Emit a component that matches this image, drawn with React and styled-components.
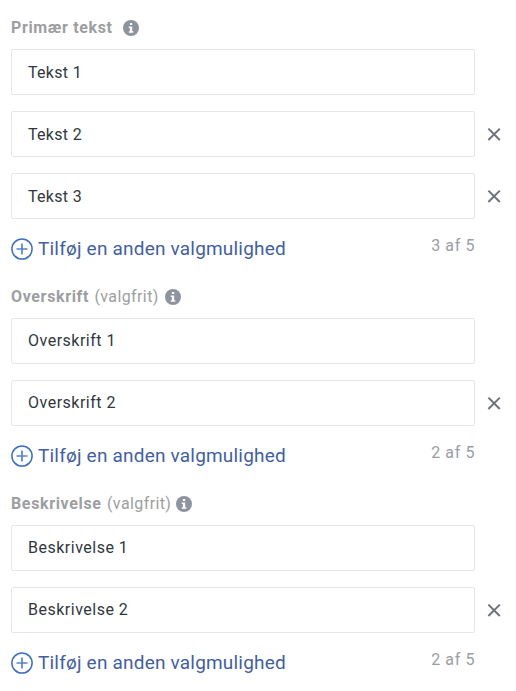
import React, { useState } from "react";
import styled, { createGlobalStyle } from "styled-components";

const GlobalStyle = createGlobalStyle`
  * {
    box-sizing: border-box;
  }

  body {
    margin: 0;
    background-color: #ffffff;
    font-family: Roboto, "Liberation Sans", sans-serif;
  }
`

const Form = styled.div`
  width: 516px;
  height: 691px;
  padding: 17px 14px 0 11px;
  overflow: hidden;
`

const Header = styled.div`
  display: flex;
  align-items: center;
  height: 21px;
  margin-bottom: 11px;
  font-size: 16px;
  line-height: 21px;
  color: #9c9ea1;
  white-space: pre;

  .title {
    font-weight: 700;
    letter-spacing: 0.65px;
  }

  .optional {
    margin-left: 1px;
    letter-spacing: 0.4px;
  }

  svg {
    margin-left: ${props => props.$iconGap};
  }
`

const Fields = styled.div`
  display: flex;
  flex-direction: column;
  gap: 16px;
`

const FieldRow = styled.div`
  display: flex;
  align-items: center;
`

const Input = styled.input`
  width: 464px;
  height: 46px;
  padding: ${props => (props.$raised ? "0 16px 2px" : "0 16px")};
  border: 1px solid #e5e6e7;
  border-radius: 2px;
  outline: none;
  background-color: #ffffff;
  color: #303740;
  font-family: inherit;
  font-size: 16px;
  letter-spacing: ${props => (props.$raised ? "0.5px" : "0.3px")};
`

const RemoveButton = styled.button`
  display: flex;
  margin-left: 12px;
  padding: 0;
  border: none;
  background: none;
  cursor: pointer;
`

const Footer = styled.div`
  display: flex;
  justify-content: space-between;
  width: 464px;
  height: 67px;
  padding-top: 17px;
`

const AddButton = styled.button`
  display: flex;
  align-items: center;
  gap: 5px;
  height: 26px;
  padding: 0;
  border: none;
  background: none;
  color: #42609f;
  font-family: inherit;
  font-size: 19px;
  letter-spacing: 0.2px;
  cursor: pointer;

  span {
    padding-bottom: 2px;
  }
`

const Count = styled.div`
  height: 20px;
  font-size: 16px;
  line-height: 20px;
  letter-spacing: 0.6px;
  color: #989ea6;
`

const InfoIcon = () => (
  <svg width="16" height="16" viewBox="0 0 16 16">
    <circle cx="8" cy="8" r="8" fill="#8d949e" />
    <path d="M6.9 3h2.3v2.1H6.9zM5.7 6.5h3.5v4.8h1.1v1.4H5.8v-1.4h1.1V7.9H5.7z" fill="#ffffff" />
  </svg>
)

const CloseIcon = () => (
  <svg width="14" height="14" viewBox="0 0 14 14">
    <path d="M1.4 1.6l11.4 11.4M12.8 1.6L1.4 13" stroke="#6b727c" strokeWidth="2" />
  </svg>
)

const PlusIcon = () => (
  <svg width="22" height="22" viewBox="0 0 22 22" fill="none">
    <circle cx="11" cy="11" r="10.1" stroke="#3c6fbd" strokeWidth="1.5" />
    <path d="M5.5 11h11M11 5.5v11" stroke="#5583c8" strokeWidth="1.7" />
  </svg>
)

const sections = [
  { title: "Primær tekst", iconGap: "10px", options: ["Tekst 1", "Tekst 2", "Tekst 3"] },
  { title: "Overskrift", optional: true, iconGap: "6px", options: ["Overskrift 1", "Overskrift 2"] },
  { title: "Beskrivelse", optional: true, iconGap: "5px", options: ["Beskrivelse 1", "Beskrivelse 2"] }
];

const MAX_OPTIONS = 5;

const OptionSection = ({ section }) => {
  const [options, setOptions] = useState(section.options);

  //function for changing the text of one option
  const changeOption = (index, text) => {
    setOptions(options.map((option, i) => (i === index ? text : option)));
  };

  const removeOption = (index) => {
    setOptions(options.filter((option, i) => i !== index));
  };

  const addOption = () => {
    if (options.length < MAX_OPTIONS) {
      setOptions([...options, ""]);
    }
  };

  return (
    <section>
      <Header $iconGap={section.iconGap}>
        <span className="title">{section.title}</span>
        {section.optional && <span className="optional"> (valgfrit)</span>}
        <InfoIcon />
      </Header>
      <Fields>
        {options.map((option, index) => (
          <FieldRow key={index}>
            <Input
              $raised={section.optional}
              value={option}
              onChange={(e) => changeOption(index, e.target.value)} />
            {/* the first option can not be removed */}
            {index > 0 && (
              <RemoveButton aria-label="Fjern" onClick={() => removeOption(index)}>
                <CloseIcon />
              </RemoveButton>
            )}
          </FieldRow>
        ))}
      </Fields>
      <Footer>
        <AddButton onClick={addOption}>
          <PlusIcon />
          <span>Tilføj en anden valgmulighed</span>
        </AddButton>
        <Count>{options.length} af {MAX_OPTIONS}</Count>
      </Footer>
    </section>
  )
}

const App = () => (
  <>
    <GlobalStyle />
    <Form>
      {sections.map((section) => (
        <OptionSection key={section.title} section={section} />
      ))}
    </Form>
  </>
)

export default App
